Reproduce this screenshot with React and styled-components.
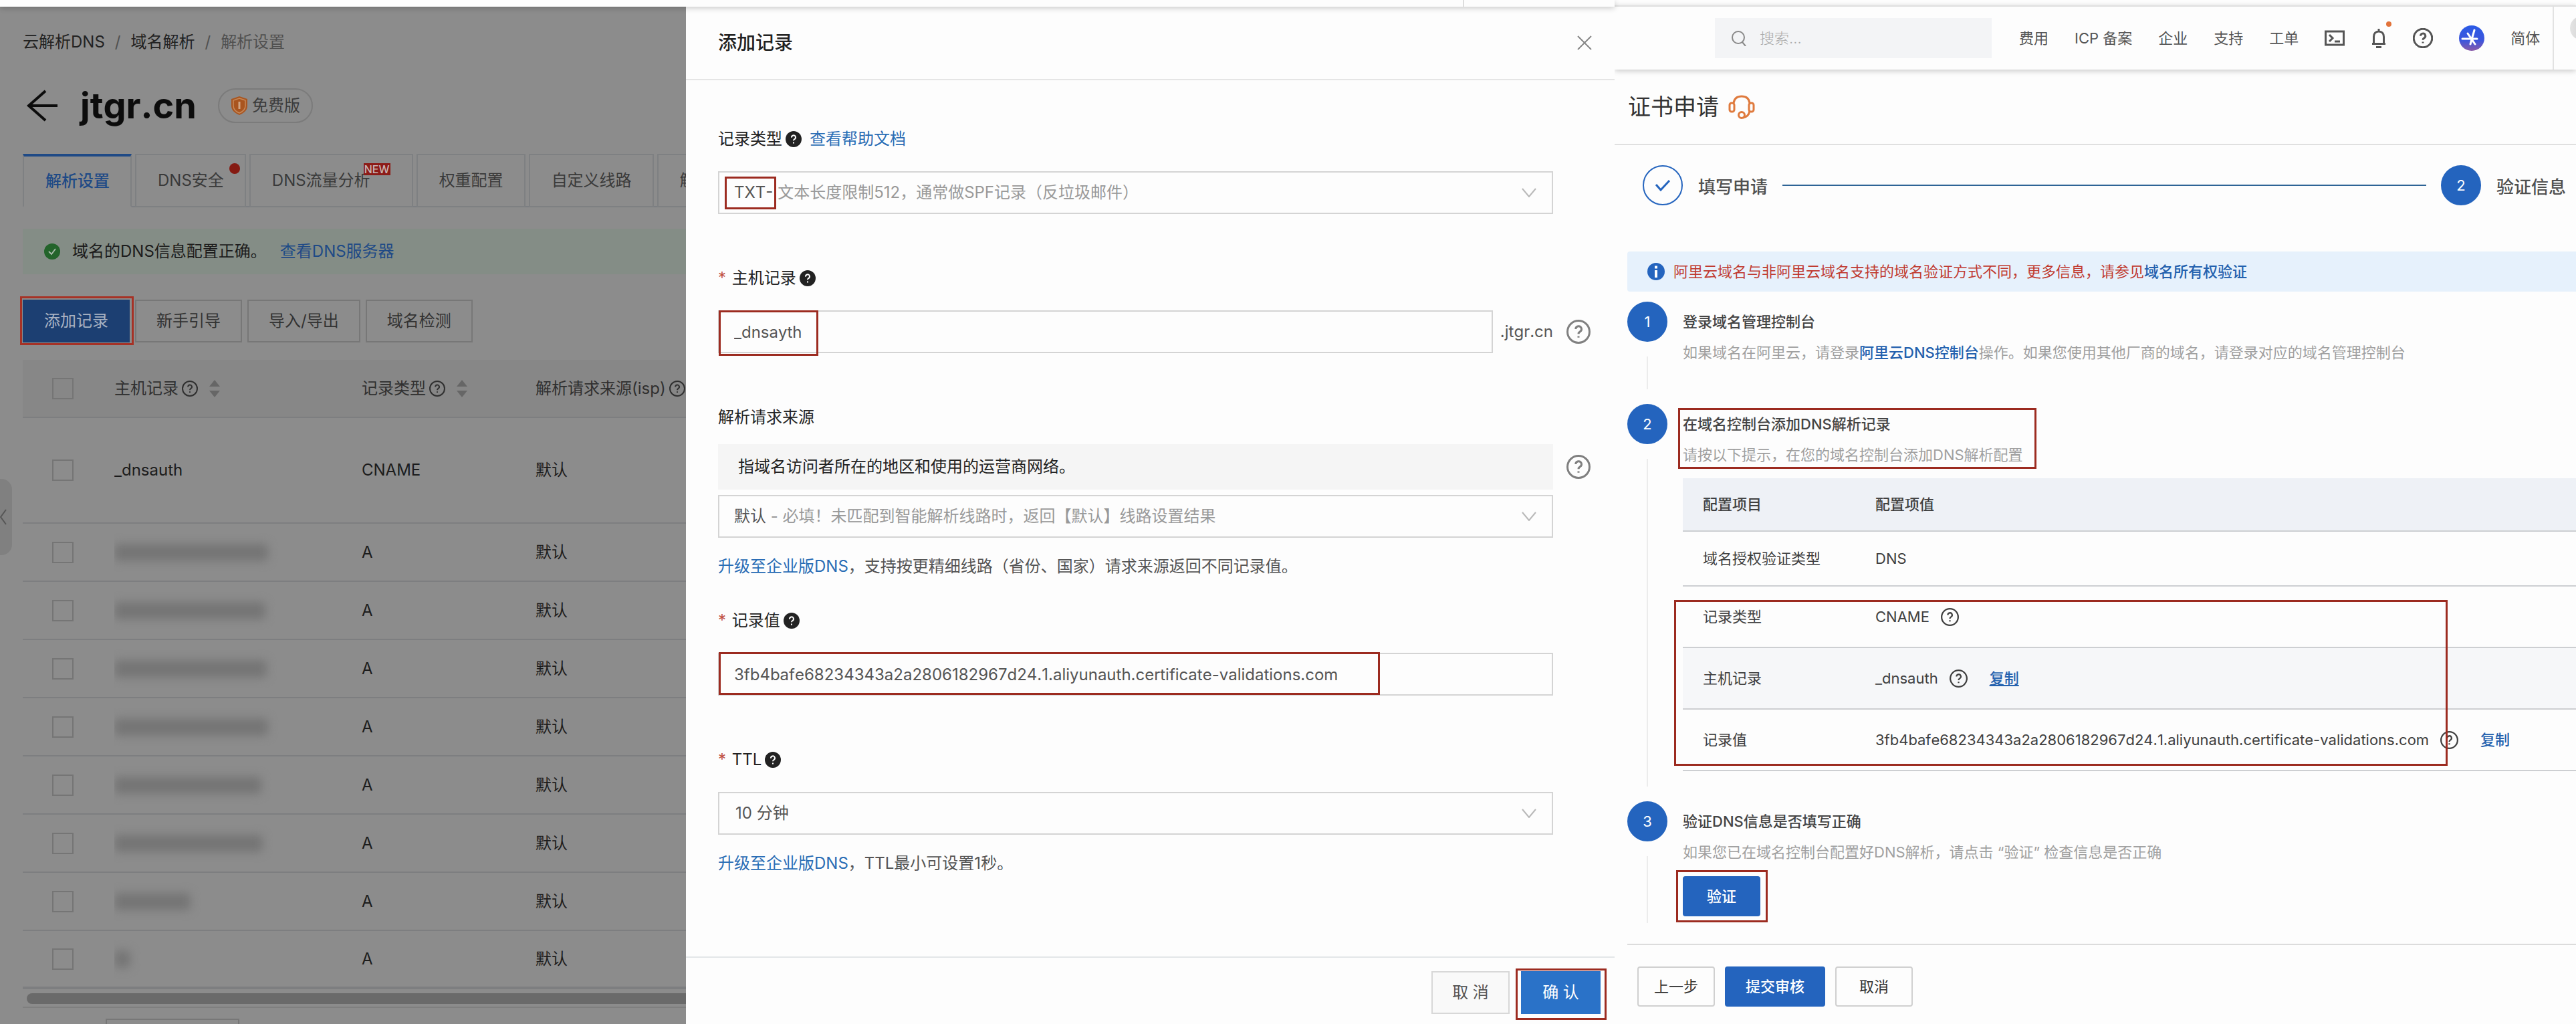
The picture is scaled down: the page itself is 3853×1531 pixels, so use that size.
import React from "react";
import styled, { createGlobalStyle, css } from "styled-components";

const RECORD_VALUE =
  "3fb4bafe68234343a2a2806182967d24.1.aliyunauth.certificate-validations.com";

const GlobalStyle = createGlobalStyle`
  * {
    box-sizing: border-box;
  }

  body {
    margin: 0;
    background: #fdfdfd;
    font-family: Inter, "Noto Sans CJK SC", sans-serif;
    font-size: 24px;
    line-height: 36px;
    color: #222;
    font-kerning: none;
  }

  button, input, select {
    font: inherit;
    color: inherit;
    margin: 0;
  }

  a {
    text-decoration: none;
  }

  h1, h2, h3, p {
    margin: 0;
    font-size: inherit;
    font-weight: inherit;
  }
`;

const Page = styled.div`
  display: grid;
  grid-template-columns: 2415fr 1438fr;
  height: 100vh;
  overflow: hidden;
`;

const Marker = styled.span`
  position: absolute;
  z-index: 3;
  inset: ${(p) => p.$inset};
  width: ${(p) => p.$width || "auto"};
  border: 3px solid ${(p) => p.$color || "#9c2b20"};
  pointer-events: none;
`;

/* ---------- icons ---------- */

const Svg = styled.svg`
  display: block;
  flex: none;
  fill: none;
  stroke: currentColor;
`;

function HelpOutline({ size = 24, width = 2 }) {
  return (
    <Svg width={size} height={size} viewBox="0 0 24 24" strokeWidth={width}>
      <circle cx="12" cy="12" r="11" />
      <path d="M9.2 9.4a2.9 2.9 0 1 1 4.3 2.5c-1 .6-1.5 1.1-1.5 2.3M12 16.3v1.6" />
    </Svg>
  );
}

function HelpSolid() {
  return (
    <Svg width="24" height="24" viewBox="0 0 24 24" strokeWidth="2">
      <circle cx="12" cy="12" r="12" fill="#222" stroke="none" />
      <path
        d="M9 9.6a3 3 0 1 1 4.4 2.4c-1 .6-1.4 1.1-1.4 2.2M12 16.4v2"
        stroke="#fff"
      />
    </Svg>
  );
}

function Chevron() {
  return (
    <Svg width="22" height="14" viewBox="0 0 22 14" strokeWidth="2">
      <path d="M1 1l10 12L21 1" />
    </Svg>
  );
}

function Sorter() {
  return (
    <Svg width="16" height="26" viewBox="0 0 16 26">
      <path d="M8 0l8 10H0zM8 26l8-10H0z" fill="#666" stroke="none" />
    </Svg>
  );
}

/* ---------- DNS console ---------- */

const Console = styled.section`
  display: flex;
  flex-direction: column;
  min-width: 0;
  min-height: 0;
`;

const ConsoleStrip = styled.div`
  position: relative;
  z-index: 2;
  display: flex;
  flex: none;
  justify-content: flex-end;
  height: 10px;
  padding-right: 225px;
  background: #fdfdfd;
  box-shadow: 0 2px 8px rgba(0, 0, 0, 0.22);
`;

const StripDivider = styled.div`
  width: 2px;
  background: #ddd;
`;

const ConsoleBody = styled.div`
  display: grid;
  flex: 1;
  grid-template-columns: minmax(0, 1026fr) minmax(0, 1389fr);
  min-height: 0;
`;

const DnsPage = styled.main`
  position: relative;
  padding: 35px 0 0 34px;
  overflow: hidden;
  background: #8c8c8c;
  color: #1c1c1c;
  white-space: nowrap;
`;

const Breadcrumb = styled.nav`
  display: flex;
  gap: 15px;

  a {
    color: #222;
  }

  span {
    color: #505050;
  }
`;

const DomainRow = styled.div`
  display: flex;
  align-items: center;
  height: 52px;
  margin-top: 51px;
`;

const BackButton = styled.button`
  display: flex;
  width: 86px;
  padding: 0 0 0 5px;
  border: 0;
  background: none;
  color: #0c0c0c;
`;

const DomainName = styled.h1`
  font-size: 54px;
  font-weight: 700;
  line-height: 52px;
  color: #0c0c0c;
`;

const PlanBadge = styled.div`
  display: flex;
  align-items: center;
  gap: 6px;
  height: 52px;
  margin-left: 32px;
  padding: 0 17px;
  border: 2px solid #7b7b7b;
  border-radius: 26px;
  color: #3c3c3c;
`;

const Tabs = styled.div`
  display: flex;
  gap: 5px;
  height: 80px;
  margin-top: 46px;
  border-bottom: 2px solid #7b7e82;
`;

const Tab = styled.button`
  position: relative;
  flex: none;
  height: 80px;
  padding: 0 ${(p) => (p.$wide ? 62 : 31)}px 0 32px;
  border: 2px solid #7e8082;
  background: #8c8c8c;
  color: #3a3a3a;

  ${(p) =>
    p.$active &&
    css`
      border-top: 4px solid #1f4a86;
      border-bottom-color: #8c8c8c;
      color: #1f4a86;
      font-weight: 500;
    `}
`;

const TabDot = styled.span`
  position: absolute;
  top: 12px;
  right: 7px;
  width: 16px;
  height: 16px;
  border-radius: 50%;
  background: #851a12;
`;

const TabNew = styled.span`
  position: absolute;
  top: 12px;
  right: 32px;
  width: 40px;
  height: 18px;
  background: #8c1b17;
  color: #c9b5b5;
  font-size: 16px;
  font-weight: 500;
  line-height: 18px;
`;

const Notice = styled.div`
  display: flex;
  align-items: center;
  height: 68px;
  margin-top: 32px;
  padding-left: 32px;
  background: #848d86;

  p {
    margin: 0 20px 0 18px;
  }

  a {
    color: #1f4a86;
  }
`;

const Toolbar = styled.div`
  display: flex;
  gap: 8px;
  margin-top: 38px;
`;

const ToolButton = styled.button`
  position: relative;
  height: 64px;
  padding: 0 30px;
  border: 2px solid ${(p) => (p.$primary ? "#1c3f72" : "#777")};
  background: ${(p) => (p.$primary ? "#1c3f72" : "transparent")};
  color: ${(p) => (p.$primary ? "#a8b2c2" : "#333")};
`;

const RecordTable = styled.table`
  width: 100%;
  margin-top: 26px;
  border-collapse: separate;
  border-spacing: 0;
  table-layout: fixed;
  text-align: left;

  th, td {
    height: 87px;
    padding: 0;
    border-bottom: 2px solid #7d7e80;
    overflow: hidden;
  }

  th {
    background: #878787;
    font-weight: 400;
    color: #303030;
  }

  tbody tr:first-child td {
    height: 158px;
  }

  tbody tr:last-child td {
    border-bottom-width: 4px;
  }
`;

const CheckCol = styled.col`
  width: 137px;
`;

const HostCol = styled.col`
  width: 370px;
`;

const TypeCol = styled.col`
  width: 260px;
`;

const Check = styled.input`
  display: block;
  width: 32px;
  height: 32px;
  margin: 0 0 0 44px;
  border: 2px solid #757575;
  appearance: none;
`;

const HeadCell = styled.span`
  display: flex;
  align-items: center;
  gap: 5px;

  svg + svg {
    margin-left: 12px;
  }
`;

const Smudge = styled.span`
  display: block;
  width: ${(p) => p.$width}px;
  height: 26px;
  border-radius: 6px;
  background: #757575;
  filter: blur(7px);
`;

const ScrollBar = styled.div`
  height: 22px;
  padding: 6px 0 0 6px;
  margin-bottom: 4px;

  &::before {
    content: "";
    display: block;
    height: 16px;
    border-radius: 8px 0 0 8px;
    background: #6a6a6a;
  }
`;

const TableFoot = styled.div`
  padding: 16px 0 0 124px;
  border-top: 2px solid #7f7f7f;
`;

const FootButton = styled.button`
  width: 200px;
  height: 64px;
  border: 2px solid #777;
  background: transparent;
`;

const SideHandle = styled.button`
  position: absolute;
  top: 706px;
  left: 0;
  display: flex;
  align-items: center;
  width: 18px;
  height: 114px;
  padding: 0;
  border: 0;
  border-radius: 0 16px 16px 0;
  background: #808080;
  color: #555;
`;

const RECORD_ROWS = [
  { host: "_dnsauth", type: "CNAME" },
  { smudge: 230, type: "A" },
  { smudge: 226, type: "A" },
  { smudge: 228, type: "A" },
  { smudge: 230, type: "A" },
  { smudge: 220, type: "A" },
  { smudge: 222, type: "A" },
  { smudge: 114, type: "A" },
  { smudge: 24, type: "A" },
];

function DnsConsole() {
  return (
    <DnsPage>
      <Breadcrumb>
        <a href="#dns">云解析DNS</a>
        <span>/</span>
        <a href="#domains">域名解析</a>
        <span>/</span>
        <span>解析设置</span>
      </Breadcrumb>
      <DomainRow>
        <BackButton aria-label="返回">
          <Svg width="48" height="48" viewBox="0 0 48 48" strokeWidth="4">
            <path d="M29 2L4 24l25 22M4 24h43" />
          </Svg>
        </BackButton>
        <DomainName>jtgr.cn</DomainName>
        <PlanBadge>
          <Svg width="26" height="28" viewBox="0 0 26 28">
            <path
              d="M13 0l12 4v10c0 7-5 11-12 14C6 25 1 21 1 14V4z"
              fill="#a9551f"
              stroke="none"
            />
            <path
              d="M13 3l9 3v8c0 5-4 9-9 11-5-2-9-6-9-11V6z"
              stroke="#c58a5c"
              strokeWidth="1.5"
            />
            <path d="M13 8v11" stroke="#d0a582" strokeWidth="3" />
          </Svg>
          免费版
        </PlanBadge>
      </DomainRow>
      <Tabs>
        <Tab $active>解析设置</Tab>
        <Tab>
          DNS安全
          <TabDot />
        </Tab>
        <Tab $wide>
          DNS流量分析
          <TabNew>NEW</TabNew>
        </Tab>
        <Tab>权重配置</Tab>
        <Tab>自定义线路</Tab>
        <Tab>解</Tab>
      </Tabs>
      <Notice>
        <Svg width="24" height="24" viewBox="0 0 24 24" strokeWidth="2">
          <circle cx="12" cy="12" r="12" fill="#23642b" stroke="none" />
          <path d="M7 12l4 4 6-8" stroke="#a5b8a7" />
        </Svg>
        <p>域名的DNS信息配置正确。</p>
        <a href="#servers">查看DNS服务器</a>
      </Notice>
      <Toolbar>
        <ToolButton $primary>
          添加记录
          <Marker $inset="-7px -8px -6px -6px" $color="#a63226" />
        </ToolButton>
        <ToolButton>新手引导</ToolButton>
        <ToolButton>导入/导出</ToolButton>
        <ToolButton>域名检测</ToolButton>
      </Toolbar>
      <RecordTable>
        <colgroup>
          <CheckCol />
          <HostCol />
          <TypeCol />
          <col />
        </colgroup>
        <thead>
          <tr>
            <th>
              <Check type="checkbox" aria-label="全选" />
            </th>
            <th>
              <HeadCell>
                主机记录
                <HelpOutline />
                <Sorter />
              </HeadCell>
            </th>
            <th>
              <HeadCell>
                记录类型
                <HelpOutline />
                <Sorter />
              </HeadCell>
            </th>
            <th>
              <HeadCell>
                解析请求来源(isp)
                <HelpOutline />
              </HeadCell>
            </th>
          </tr>
        </thead>
        <tbody>
          {RECORD_ROWS.map((row, i) => (
            <tr key={i}>
              <td>
                <Check type="checkbox" aria-label={`选择第${i + 1}行`} />
              </td>
              <td>{row.host || <Smudge $width={row.smudge} />}</td>
              <td>{row.type}</td>
              <td>默认</td>
            </tr>
          ))}
        </tbody>
      </RecordTable>
      <ScrollBar />
      <TableFoot>
        <FootButton aria-label="批量操作" />
      </TableFoot>
      <SideHandle aria-label="收起">
        <Svg width="10" height="24" viewBox="0 0 10 24" strokeWidth="2">
          <path d="M9 1L1 12l8 11" />
        </Svg>
      </SideHandle>
    </DnsPage>
  );
}

/* ---------- add record drawer ---------- */

const DrawerBox = styled.aside`
  display: flex;
  flex-direction: column;
  min-height: 0;
  background: #fdfdfd;
  box-shadow: 0 0 8px rgba(0, 0, 0, 0.3);
`;

const DrawerHead = styled.header`
  display: flex;
  flex: none;
  align-items: center;
  justify-content: space-between;
  height: 110px;
  padding: 0 34px 0 48px;
  border-bottom: 2px solid #e5e5e5;
  font-size: 28px;
  font-weight: 500;
`;

const CloseButton = styled.button`
  padding: 0;
  border: 0;
  background: none;
  color: #888;
`;

const DrawerBody = styled.form`
  flex: 1;
  min-height: 0;
  padding: 70px 36px 0 48px;
`;

const Field = styled.div`
  margin-bottom: ${(p) => (p.$tight ? 45 : 78)}px;
`;

const LabelRow = styled.div`
  display: flex;
  align-items: center;
  gap: 5px;
  margin-bottom: ${(p) => (p.$tight ? 22 : 30)}px;

  a {
    margin-left: 7px;
  }
`;

const Star = styled.span`
  margin-right: 2px;
  color: #c0503f;
`;

const ControlRow = styled.div`
  display: grid;
  grid-template-columns: minmax(0, 1fr) 36px;
  gap: 20px;
  align-items: center;
  color: #808080;

  & + & {
    margin-top: 8px;
  }
`;

const ControlGroup = styled.div`
  display: flex;
  align-items: center;
  gap: 11px;
  color: #555;
`;

const ControlBox = styled.div`
  position: relative;
  display: flex;
  flex: 1;
  align-items: center;
  height: 64px;
  border: 2px solid #d4d4d4;
  color: #555;
`;

const TextInput = styled.input`
  width: 100%;
  height: 60px;
  padding: 0 22px;
  border: 0;
  outline: 0;
  background: transparent;
`;

const Select = styled.select`
  width: 100%;
  height: 60px;
  padding: 0 24px;
  border: 0;
  outline: 0;
  background: transparent;
  appearance: none;
`;

const CoverSelect = styled(Select)`
  position: absolute;
  inset: 0;
  opacity: 0;
`;

const SelectValue = styled.span`
  padding-left: 22px;
  color: #999;

  b {
    color: #555;
    font-weight: 400;
  }
`;

const Arrow = styled.span`
  position: absolute;
  right: 23px;
  color: #b8b8b8;
  pointer-events: none;
`;

const Tip = styled.p`
  display: flex;
  align-items: center;
  height: 68px;
  padding-left: 30px;
  background: #f5f5f5;
  color: #222;
`;

const Hint = styled.p`
  margin-top: 25px;
  color: #555;
`;

const TextLink = styled.a`
  color: #2a6db5;
`;

const DrawerFoot = styled.footer`
  display: flex;
  flex: none;
  justify-content: flex-end;
  gap: 17px;
  height: 101px;
  padding: 20px 21px 0 0;
  border-top: 2px solid #e3e6e9;
`;

const FootAction = styled.button`
  position: relative;
  width: ${(p) => (p.$primary ? 119 : 117)}px;
  height: 64px;
  padding: 0;
  border: 2px solid ${(p) => (p.$primary ? "#2a72c8" : "#d8d8d8")};
  background: ${(p) => (p.$primary ? "#2a72c8" : "#f9f9f9")};
  color: ${(p) => (p.$primary ? "#fff" : "#555")};
`;

function AddRecordDrawer() {
  return (
    <DrawerBox>
      <DrawerHead>
        <h2>添加记录</h2>
        <CloseButton aria-label="关闭">
          <Svg width="22" height="22" viewBox="0 0 22 22" strokeWidth="2">
            <path d="M1 1l20 20M21 1L1 21" />
          </Svg>
        </CloseButton>
      </DrawerHead>
      <DrawerBody>
        <Field>
          <LabelRow>
            <label htmlFor="type">记录类型</label>
            <HelpSolid />
            <TextLink href="#help">查看帮助文档</TextLink>
          </LabelRow>
          <ControlRow>
            <ControlBox>
              <CoverSelect id="type">
                <option>TXT</option>
              </CoverSelect>
              <SelectValue>
                <b>TXT-</b> 文本长度限制512，通常做SPF记录（反垃圾邮件）
              </SelectValue>
              <Arrow>
                <Chevron />
              </Arrow>
              <Marker $inset="6px auto 5px 8px" $width="77px" />
            </ControlBox>
          </ControlRow>
        </Field>
        <Field>
          <LabelRow>
            <label htmlFor="host">
              <Star>*</Star> 主机记录
            </label>
            <HelpSolid />
          </LabelRow>
          <ControlRow>
            <ControlGroup>
              <ControlBox>
                <TextInput id="host" defaultValue="_dnsayth" />
                <Marker $inset="-2px auto -6px -1px" $width="149px" />
              </ControlBox>
              .jtgr.cn
            </ControlGroup>
            <HelpOutline size={36} />
          </ControlRow>
        </Field>
        <Field $tight>
          <LabelRow $tight>
            <label htmlFor="line">解析请求来源</label>
          </LabelRow>
          <ControlRow>
            <Tip>指域名访问者所在的地区和使用的运营商网络。</Tip>
            <HelpOutline size={36} />
          </ControlRow>
          <ControlRow>
            <ControlBox>
              <CoverSelect id="line">
                <option>默认</option>
              </CoverSelect>
              <SelectValue>
                <b>默认</b> - 必填！未匹配到智能解析线路时，返回【默认】线路设置结果
              </SelectValue>
              <Arrow>
                <Chevron />
              </Arrow>
            </ControlBox>
          </ControlRow>
          <Hint>
            <TextLink href="#upgrade">升级至企业版DNS</TextLink>
            ，支持按更精细线路（省份、国家）请求来源返回不同记录值。
          </Hint>
        </Field>
        <Field>
          <LabelRow>
            <label htmlFor="value">
              <Star>*</Star> 记录值
            </label>
            <HelpSolid />
          </LabelRow>
          <ControlRow>
            <ControlBox>
              <TextInput id="value" defaultValue={RECORD_VALUE} />
              <Marker $inset="-3px auto -1px -1px" $width="989px" />
            </ControlBox>
          </ControlRow>
        </Field>
        <Field>
          <LabelRow>
            <label htmlFor="ttl">
              <Star>*</Star> TTL
            </label>
            <HelpSolid />
          </LabelRow>
          <ControlRow>
            <ControlBox>
              <Select id="ttl">
                <option>10 分钟</option>
              </Select>
              <Arrow>
                <Chevron />
              </Arrow>
            </ControlBox>
          </ControlRow>
          <Hint>
            <TextLink href="#upgrade">升级至企业版DNS</TextLink>
            ，TTL最小可设置1秒。
          </Hint>
        </Field>
      </DrawerBody>
      <DrawerFoot>
        <FootAction>取 消</FootAction>
        <FootAction $primary>
          确 认
          <Marker $inset="-6px -11px -11px -10px" />
        </FootAction>
      </DrawerFoot>
    </DrawerBox>
  );
}

/* ---------- certificate page ---------- */

const CertPage = styled.section`
  min-width: 0;
  overflow: hidden;
  padding-top: 8px;
  background: #fdfdfd;
  font-size: 22px;
  line-height: 32px;
  white-space: nowrap;
`;

const TopBar = styled.header`
  display: flex;
  align-items: center;
  height: 96px;
  padding-left: 150px;
  border-top: 2px solid #e0e0e0;
  box-shadow: 0 2px 8px rgba(0, 0, 0, 0.22);
  color: #555;
`;

const SearchBox = styled.label`
  display: flex;
  flex: none;
  align-items: center;
  gap: 19px;
  width: 414px;
  height: 60px;
  padding-left: 24px;
  background: #f3f4f6;
  color: #888;

  input {
    flex: 1;
    min-width: 0;
    padding: 0;
    border: 0;
    outline: 0;
    background: none;
    font-weight: 300;
  }

  input::placeholder {
    color: #aaa;
  }
`;

const TopNav = styled.nav`
  display: flex;
  flex: none;
  align-items: center;
  gap: 39px;
  margin: 0 19px 0 41px;

  a {
    color: #555;
  }
`;

const IconButton = styled.button`
  position: relative;
  padding: 0;
  border: 0;
  background: none;
  color: #555;
`;

const BellDot = styled.span`
  position: absolute;
  top: -10px;
  right: -7px;
  width: 8px;
  height: 8px;
  border-radius: 50%;
  background: #e2733a;
`;

const UserSlot = styled.div`
  flex: none;
  width: 60px;
  height: 94px;
  padding: 14px 0 0 24px;
  border-left: 2px solid #e2e2e2;
`;

const UserFace = styled.div`
  width: 50px;
  height: 36px;
  border-radius: 18px;
  background: linear-gradient(90deg, #e4e4e4, #bbb);
`;

const CertTitle = styled.div`
  display: flex;
  align-items: center;
  gap: 14px;
  height: 113px;
  padding-left: 20px;
  border-bottom: 2px solid #e0e0e0;
  font-size: 34px;
  color: #333;
`;

const Progress = styled.ol`
  display: flex;
  align-items: center;
  margin: 30px 15px 0 42px;
  padding: 0;
  list-style: none;
  font-size: 26px;
  font-weight: 500;
  color: #505050;
`;

const ProgressItem = styled.li`
  display: flex;
  align-items: center;
  gap: 23px;
`;

const ProgressLabel = styled.span`
  padding-top: 6px;
`;

const ProgressLine = styled.li`
  flex: 1;
  height: 2px;
  margin: 0 22px;
  background: #2e6496;
`;

const Circle = styled.span`
  display: flex;
  flex: none;
  align-items: center;
  justify-content: center;
  width: 60px;
  height: 60px;
  border: 2px solid #2464be;
  border-radius: 50%;
  background: ${(p) => (p.$open ? "transparent" : "#2464be")};
  color: ${(p) => (p.$open ? "#2464be" : "#fff")};
  font-size: 22px;
  font-weight: 400;
`;

const InfoBar = styled.div`
  display: flex;
  align-items: center;
  height: 60px;
  margin: 69px 0 15px 19px;
  padding-left: 30px;
  border-radius: 4px 0 0 4px;
  background: #e6f1fc;
  color: #c0392f;

  p {
    margin-left: 13px;
  }
`;

const BoldLink = styled.a`
  color: #2461ae;
  font-weight: 500;
  text-decoration: ${(p) => (p.$underline ? "underline" : "none")};
`;

const Steps = styled.ol`
  margin: 0;
  padding: 0 0 0 19px;
  list-style: none;
`;

const StepItem = styled.li`
  display: grid;
  grid-template-columns: 60px minmax(0, 1fr);
  gap: 23px;
`;

const Rail = styled.div`
  display: flex;
  flex-direction: column;
  align-items: center;

  &::after {
    content: "";
    flex: 1;
    width: 2px;
    margin: 22px 0;
    background: #ececec;
  }
`;

const StepBody = styled.div`
  padding: 14px 0 ${(p) => p.$end}px;
`;

const StepHead = styled.div`
  position: relative;
  width: max-content;

  h3 {
    margin-bottom: 14px;
    color: #444;
    font-weight: 500;
  }

  p {
    color: #a0a0a0;
  }
`;

const ConfigBox = styled.div`
  position: relative;
  margin-top: 19px;
`;

const ConfigTable = styled.table`
  width: 100%;
  border-collapse: separate;
  border-spacing: 0;
  table-layout: fixed;
  text-align: left;
  color: #404040;

  th, td {
    height: 92px;
    padding: 0 0 0 30px;
    border-bottom: 2px solid #cdcfd2;
  }

  th {
    height: 80px;
    background: #eef1f6;
    font-weight: 500;
  }

  th:first-child {
    width: 258px;
  }

  tbody tr:first-child td {
    height: 82px;
  }

  tbody tr:nth-child(3) td {
    background: #f6f7f9;
  }
`;

const Value = styled.span`
  display: flex;
  align-items: center;
  gap: 17px;

  a {
    margin-left: 16px;
  }
`;

const Button = styled.button`
  position: relative;
  min-width: 116px;
  height: 60px;
  padding: 0 29px;
  border: 2px solid ${(p) => (p.$primary ? "#2464be" : "#d0d0d0")};
  border-radius: 4px;
  background: ${(p) => (p.$primary ? "#2464be" : "#fdfdfd")};
  color: ${(p) => (p.$primary ? "#fff" : "#333")};
  font-weight: ${(p) => (p.$primary ? 500 : 400)};
`;

const SmallButton = styled(Button)`
  padding: 0 23px;
`;

const VerifyButton = styled(Button)`
  display: block;
  margin-top: 20px;
`;

const CertFoot = styled.footer`
  display: flex;
  gap: 15px;
  margin: 9px 0 0 19px;
  padding: 32px 0 0 15px;
  border-top: 2px solid #dcdcdc;
`;

function TopMenu() {
  return (
    <TopBar>
      <SearchBox>
        <Svg width="24" height="24" viewBox="0 0 24 24" strokeWidth="2">
          <circle cx="11" cy="11" r="9" />
          <path d="M17 18l5 6" />
        </Svg>
        <input type="text" placeholder="搜索..." aria-label="搜索" />
      </SearchBox>
      <TopNav>
        <a href="#cost">费用</a>
        <a href="#icp">ICP 备案</a>
        <a href="#company">企业</a>
        <a href="#support">支持</a>
        <a href="#ticket">工单</a>
        <IconButton aria-label="终端">
          <Svg width="30" height="24" viewBox="0 0 30 24" strokeWidth="3">
            <path d="M1.500 2h27v20h-27zM7 7l5 5-5 5M15 17h8" />
          </Svg>
        </IconButton>
        <IconButton aria-label="消息">
          <Svg width="24" height="30" viewBox="0 0 24 30" strokeWidth="3">
            <path d="M2 23.500h20M4.500 23V13c0-5 3-8 7.500-8s7.500 3 7.500 8v10M8 28.500h8M12 1v4" />
          </Svg>
          <BellDot />
        </IconButton>
        <IconButton aria-label="帮助">
          <HelpOutline size={30} width={2.4} />
        </IconButton>
        <IconButton aria-label="助手">
          <Svg width="38" height="38" viewBox="0 0 38 38">
            <defs>
              <linearGradient id="assistant" x1="0" y1="0" x2="0" y2="1">
                <stop offset="0" stopColor="#2a5be6" />
                <stop offset="0.6" stopColor="#3d55dc" />
                <stop offset="1" stopColor="#8a5aa8" />
              </linearGradient>
            </defs>
            <circle cx="19" cy="19" r="19" fill="url(#assistant)" stroke="none" />
            <path
              d="M5 20h22M23 7l-6 21M13 12l11 16"
              stroke="#fff"
              strokeWidth="3"
              strokeLinecap="round"
            />
          </Svg>
        </IconButton>
        <a href="#lang">简体</a>
      </TopNav>
      <UserSlot>
        <UserFace />
      </UserSlot>
    </TopBar>
  );
}

function Certificate() {
  return (
    <CertPage>
      <TopMenu />
      <CertTitle>
        <h1>证书申请</h1>
        <Svg
          width="40"
          height="36"
          viewBox="0 0 40 36"
          strokeWidth="3"
          color="#df7a3d"
        >
          <path d="M8 12C9 5 13 2 20 2s11 3 12 10" />
          <rect x="2" y="12" width="7" height="13" rx="3" />
          <rect x="31" y="12" width="7" height="13" rx="3" />
          <path d="M32 24c-1 6-4 9-10 10" />
          <circle cx="20" cy="30" r="4.500" />
        </Svg>
      </CertTitle>
      <Progress>
        <ProgressItem>
          <Circle $open>
            <Svg width="24" height="18" viewBox="0 0 24 18" strokeWidth="3">
              <path d="M2 8l7 8L22 2" />
            </Svg>
          </Circle>
          <ProgressLabel>填写申请</ProgressLabel>
        </ProgressItem>
        <ProgressLine />
        <ProgressItem>
          <Circle>2</Circle>
          <ProgressLabel>验证信息</ProgressLabel>
        </ProgressItem>
      </Progress>
      <InfoBar>
        <Svg width="26" height="26" viewBox="0 0 26 26" strokeWidth="4">
          <circle cx="13" cy="13" r="13" fill="#2464be" stroke="none" />
          <path d="M13 4.500v4M13 11v11" stroke="#fff" />
        </Svg>
        <p>
          阿里云域名与非阿里云域名支持的域名验证方式不同，更多信息，请参见
          <BoldLink href="#verify">域名所有权验证</BoldLink>
        </p>
      </InfoBar>
      <Steps>
        <StepItem>
          <Rail>
            <Circle>1</Circle>
          </Rail>
          <StepBody $end={61}>
            <StepHead>
              <h3>登录域名管理控制台</h3>
              <p>
                如果域名在阿里云，请登录
                <BoldLink href="#console">阿里云DNS控制台</BoldLink>
                操作。如果您使用其他厂商的域名，请登录对应的域名管理控制台
              </p>
            </StepHead>
          </StepBody>
        </StepItem>
        <StepItem>
          <Rail>
            <Circle>2</Circle>
          </Rail>
          <StepBody $end={45}>
            <StepHead>
              <Marker $inset="-8px -20px -5px -7px" />
              <h3>在域名控制台添加DNS解析记录</h3>
              <p>请按以下提示，在您的域名控制台添加DNS解析配置</p>
            </StepHead>
            <ConfigBox>
              <Marker $inset="182px auto 8px -13px" $width="1157px" />
              <ConfigTable>
                <thead>
                  <tr>
                    <th>配置项目</th>
                    <th>配置项值</th>
                  </tr>
                </thead>
                <tbody>
                  <tr>
                    <td>域名授权验证类型</td>
                    <td>DNS</td>
                  </tr>
                  <tr>
                    <td>记录类型</td>
                    <td>
                      <Value>
                        CNAME
                        <HelpOutline size={27} />
                      </Value>
                    </td>
                  </tr>
                  <tr>
                    <td>主机记录</td>
                    <td>
                      <Value>
                        _dnsauth
                        <HelpOutline size={27} />
                        <BoldLink href="#copy-host" $underline>
                          复制
                        </BoldLink>
                      </Value>
                    </td>
                  </tr>
                  <tr>
                    <td>记录值</td>
                    <td>
                      <Value>
                        {RECORD_VALUE}
                        <HelpOutline size={27} />
                        <BoldLink href="#copy-value">复制</BoldLink>
                      </Value>
                    </td>
                  </tr>
                </tbody>
              </ConfigTable>
            </ConfigBox>
          </StepBody>
        </StepItem>
        <StepItem>
          <Rail>
            <Circle>3</Circle>
          </Rail>
          <StepBody $end={32}>
            <StepHead>
              <h3>验证DNS信息是否填写正确</h3>
              <p>如果您已在域名控制台配置好DNS解析，请点击 “验证” 检查信息是否正确</p>
            </StepHead>
            <VerifyButton $primary>
              验证
              <Marker $inset="-11px -13px -11px -12px" />
            </VerifyButton>
          </StepBody>
        </StepItem>
      </Steps>
      <CertFoot>
        <SmallButton>上一步</SmallButton>
        <Button $primary>提交审核</Button>
        <SmallButton>取消</SmallButton>
      </CertFoot>
    </CertPage>
  );
}

export default function App() {
  return (
    <>
      <GlobalStyle />
      <Page>
        <Console>
          <ConsoleStrip>
            <StripDivider />
          </ConsoleStrip>
          <ConsoleBody>
            <DnsConsole />
            <AddRecordDrawer />
          </ConsoleBody>
        </Console>
        <Certificate />
      </Page>
    </>
  );
}
